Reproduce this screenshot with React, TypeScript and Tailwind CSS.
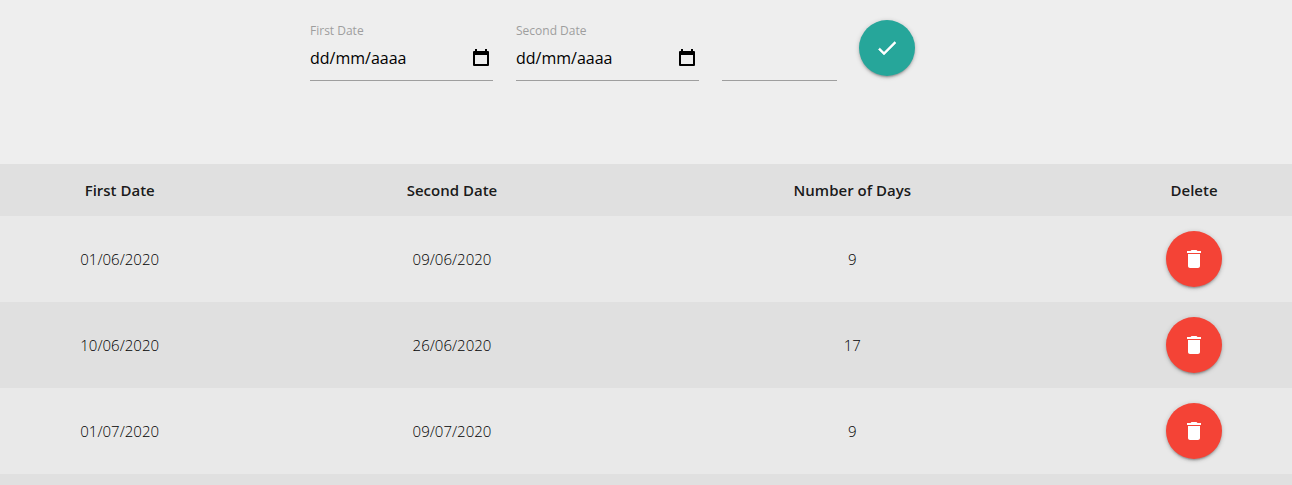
import { useId } from "react";
import { MdDelete } from "react-icons/md";

const rows = [
  { first: "01/06/2020", second: "09/06/2020", days: 9 },
  { first: "10/06/2020", second: "26/06/2020", days: 17 },
  { first: "01/07/2020", second: "09/07/2020", days: 9 },
];

function CalendarIcon() {
  return (
    <svg viewBox="0 0 16 18" className="h-[18px] w-4" fill="currentColor" aria-hidden="true">
      <path d="M2 0h2v2h8V0h2v2h1q1 0 1 1v13q0 1-1 1H1q-1 0-1-1V3q0-1 1-1h1zM2 6v9h12V6z" />
    </svg>
  );
}

function CheckIcon() {
  return (
    <svg
      viewBox="0 0 24 24"
      className="size-6"
      fill="currentColor"
      stroke="currentColor"
      strokeWidth="0.5"
      aria-hidden="true"
    >
      <path d="M9 16.17 4.83 12l-1.42 1.41L9 19 21 7l-1.41-1.41z" />
    </svg>
  );
}

function DateField({ label }: { label: string }) {
  const id = useId();
  return (
    <div className="w-[183px]">
      <label htmlFor={id} className="block text-xs leading-4 text-[#9e9e9e]">
        {label}
      </label>
      <div className="flex h-[42px] items-center border-b border-[#9e9e9e] pr-1">
        <input
          id={id}
          type="text"
          placeholder="dd/mm/aaaa"
          className="h-full min-w-0 flex-1 bg-transparent pb-1 text-base text-black outline-none placeholder:text-black"
        />
        <button type="button" aria-label={`Pick ${label}`} className="pb-1 text-black">
          <CalendarIcon />
        </button>
      </div>
    </div>
  );
}

export default function App() {
  return (
    <main className="flex min-h-screen flex-col overflow-hidden bg-[#eeeeee] font-['Open_Sans','Noto_Sans',sans-serif] text-black/90">
      <form className="flex h-[164px] items-start justify-center pt-5 pr-[67px]">
        <div className="flex items-start gap-[23px] pt-[3px]">
          <DateField label="First Date" />
          <DateField label="Second Date" />
          <input
            type="text"
            readOnly
            aria-label="Number of days"
            className="h-[58px] w-[115px] border-b border-[#9e9e9e] bg-transparent outline-none"
          />
        </div>
        <button
          type="button"
          aria-label="Add"
          className="ml-[22px] flex size-14 items-center justify-center rounded-full bg-[#26a69a] text-white shadow-[0_2px_2px_0_rgba(0,0,0,0.14),0_3px_1px_-2px_rgba(0,0,0,0.12),0_1px_5px_0_rgba(0,0,0,0.2)]"
        >
          <CheckIcon />
        </button>
      </form>

      <section className="-mr-5 -ml-9 flex-1 bg-[#e0e0e0]">
        <table className="w-full table-fixed border-collapse text-center text-[15px]">
          <thead>
            <tr className="h-[52px]">
              <th className="w-[23.1%] font-semibold">First Date</th>
              <th className="w-[26.2%] font-semibold">Second Date</th>
              <th className="w-[33.2%] font-semibold">Number of Days</th>
              <th className="w-[17.5%] font-semibold">Delete</th>
            </tr>
          </thead>
          <tbody>
            {rows.map((row) => (
              <tr key={row.first} className="h-[86px] font-light text-black odd:bg-[#e9e9e9]">
                <td>{row.first}</td>
                <td>{row.second}</td>
                <td>{row.days}</td>
                <td>
                  <button
                    type="button"
                    aria-label={`Delete ${row.first}`}
                    className="mx-auto flex size-14 items-center justify-center rounded-full bg-[#f44336] text-white shadow-[0_2px_2px_0_rgba(0,0,0,0.14),0_3px_1px_-2px_rgba(0,0,0,0.12),0_1px_5px_0_rgba(0,0,0,0.2)]"
                  >
                    <MdDelete className="size-6" />
                  </button>
                </td>
              </tr>
            ))}
          </tbody>
        </table>
      </section>
    </main>
  );
}
